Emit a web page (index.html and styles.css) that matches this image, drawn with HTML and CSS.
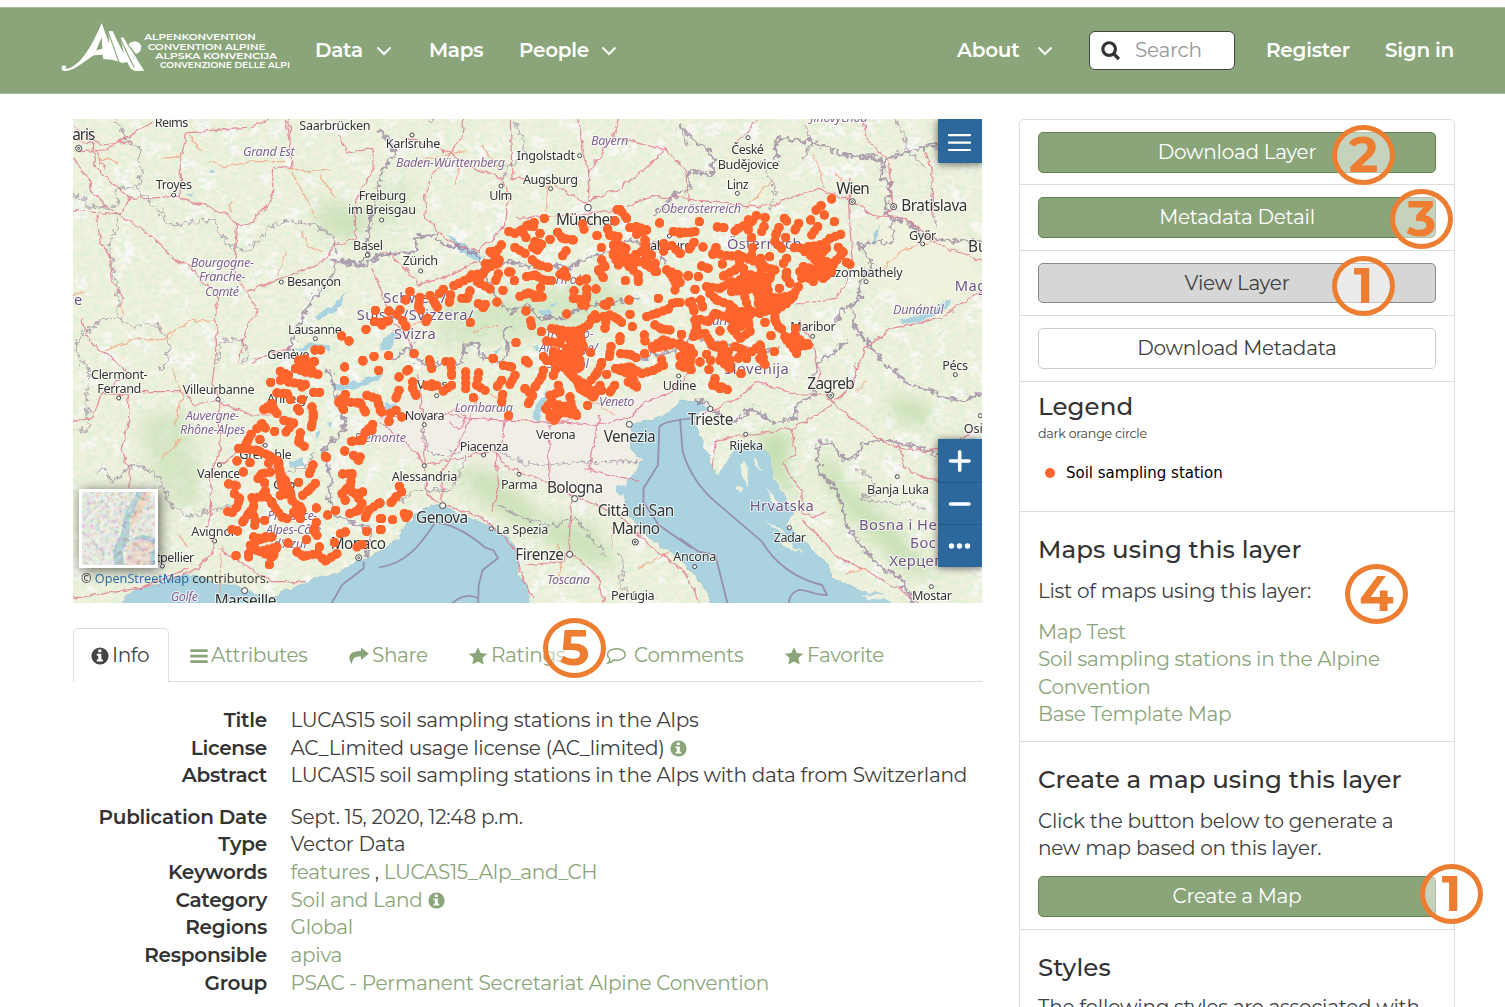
FILE: index.html
```
<!DOCTYPE html>
<html lang="en">
<head>
<meta charset="utf-8">
<title>LUCAS15 soil sampling stations in the Alps</title>
<link rel="stylesheet" href="styles.css">
</head>
<body>
<svg class="defs" width="0" height="0" aria-hidden="true">
  <symbol id="i-info" viewBox="0 0 18 18"><circle cx="9" cy="9" r="8.6" fill="currentColor"/><path d="M7.2 2.6h3.2v2.6H7.2zM5.8 6.8h4.6v5.6h1.5v2H5.8v-2h1.5V8.8H5.8z" fill="#fff"/></symbol>
  <symbol id="i-bars" viewBox="0 0 18 18"><path d="M.3 2.200h17.400V5H.3zM.3 7.700h17.400v2.800H.3zM.3 13.200h17.400V16H.3z" fill="currentColor"/></symbol>
  <symbol id="i-share" viewBox="0 0 20 18"><path d="M12 .5l7.8 6.2L12 13V9.6C6 9.3 3.200 11.300 3 17.300 1.500 15.500.4 13 .4 11 .4 5.800 5 3.900 12 3.900z" fill="currentColor"/></symbol>
  <symbol id="i-star" viewBox="0 0 20 18"><path d="M10 .2l2.700 5.800 6.500.8-4.800 4.300 1.300 6.500L10 14.400l-5.700 3.200 1.300-6.500L.8 6.800l6.500-.8z" fill="currentColor"/></symbol>
  <symbol id="i-comment" viewBox="0 0 20 18"><path d="M10.500 1.800c5 0 8.700 2.500 8.700 5.800s-3.700 5.800-8.700 5.800c-1 0-2-.1-2.900-.4-1.200 1.400-3.100 2.700-5.500 3 1.200-1 1.700-2.600 1.700-4C2.300 11 1.500 9.300 1.500 7.600c0-3.300 4-5.800 9-5.800z" fill="none" stroke="currentColor" stroke-width="1.500"/></symbol>
  <symbol id="i-chev" viewBox="0 0 16 10"><path d="M1.500 1.500L8 8l6.500-6.500" fill="none" stroke="currentColor" stroke-width="2"/></symbol>
</svg>

<header class="navbar">
  <svg class="logo" viewBox="50 60 620 160" preserveAspectRatio="none">
    <path fill="#fff" d="M57 203C56 196 66 195 69 200 65 202 67 207 73 206 112 194 143 119 162 69Q168 91 182 132L179 94 190 93Q204 128 220 161L214 130 210 113 218 112Q230 137 248 166 260 191 273 212L248 213 238 206 228 186 216 189 203 184 192 180 166 177 164 164 142 166C121 178 93 213 65 213 59 212 57 208 57 203zM162 112L147 151 163 146z"/>
    <path d="M232 133C240 119 263 123 265 139 266 153 257 162 251 161z" fill="#fff"/>
    <path d="M178 94Q194 145 209 193M209 112Q228 161 247 203" fill="none" stroke="#8ba57b" stroke-width="3"/>
    <g fill="#fff" font-family="Montserrat,Lato,sans-serif" font-weight="600" font-size="27">
      <text x="273" y="120" textLength="292" lengthAdjust="spacingAndGlyphs">ALPENKONVENTION</text>
      <text x="282" y="149" textLength="308" lengthAdjust="spacingAndGlyphs">CONVENTION ALPINE</text>
      <text x="302" y="176" textLength="319" lengthAdjust="spacingAndGlyphs">ALPSKA KONVENCIJA</text>
      <text x="314" y="205" textLength="340" lengthAdjust="spacingAndGlyphs">CONVENZIONE DELLE ALPI</text>
    </g>
  </svg>
  <nav class="nav-main">
    <a class="n-data">Data <svg class="chev"><use href="#i-chev"/></svg></a>
    <a class="n-maps">Maps</a>
    <a class="n-people">People <svg class="chev"><use href="#i-chev"/></svg></a>
  </nav>
  <nav class="nav-user">
    <a class="n-about">About <svg class="chev"><use href="#i-chev"/></svg></a>
    <div class="search"><svg viewBox="0 0 18 19"><circle cx="7.700" cy="7.700" r="6" fill="none" stroke="#333" stroke-width="3"/><path d="M12 12l5 5.200" stroke="#333" stroke-width="3.200"/></svg><span>Search</span></div>
    <a class="n-reg">Register</a>
    <a class="n-sign">Sign in</a>
  </nav>
</header>

<div class="page">
<main class="main">
  <div class="map">
    <svg class="map-canvas" viewBox="3 2 2727 1452" preserveAspectRatio="none">
      <defs>
        <filter id="woods" x="0" y="0" width="100%" height="100%"><feTurbulence type="fractalNoise" baseFrequency="0.05 0.07" numOctaves="5" seed="8"/><feColorMatrix values="0 0 0 0 .75  0 0 0 0 .865  0 0 0 0 .68  5 0 0 0 -2.250"/></filter>
        <filter id="town" x="0" y="0" width="100%" height="100%"><feTurbulence type="fractalNoise" baseFrequency="0.016" numOctaves="4" seed="21"/><feColorMatrix values="0 0 0 0 .945  0 0 0 0 .93  0 0 0 0 .905  6 0 0 0 -3.200"/></filter>
        <filter id="soft" x="-20%" y="-20%" width="140%" height="140%"><feGaussianBlur stdDeviation="22"/></filter>
        <filter id="rough" filterUnits="userSpaceOnUse" x="0" y="0" width="2740" height="1470"><feTurbulence type="fractalNoise" baseFrequency="0.06" numOctaves="2" seed="3"/><feDisplacementMap in="SourceGraphic" scale="34" xChannelSelector="R" yChannelSelector="G"/></filter>
        <filter id="wavy" filterUnits="userSpaceOnUse" x="0" y="0" width="2740" height="1470"><feTurbulence type="fractalNoise" baseFrequency="0.04" numOctaves="2" seed="9"/><feDisplacementMap in="SourceGraphic" scale="20" xChannelSelector="R" yChannelSelector="G"/></filter>
        <marker id="station" markerUnits="userSpaceOnUse" markerWidth="28" markerHeight="28" refX="14" refY="14"><circle cx="14" cy="14" r="14" fill="#ff642d" stroke="none"/></marker>
      </defs>
      <rect width="2740" height="1470" fill="#eff1dc"/>
      <rect width="2740" height="1470" filter="url(#town)"/>
      <rect width="2740" height="1470" filter="url(#woods)" opacity=".85"/>
      <g filter="url(#soft)">
        <path d="M1000 840L1150 870 1400 890 1640 860 1760 790 1830 830 1690 930 1680 1060 1760 1200 1640 1180 1400 1090 1180 1010 1000 1010 900 950z" fill="#f1ede6" opacity=".95"/>
        <path d="M1120 1060L1260 1050 1420 1200 1560 1210 1640 1360 1560 1340 1420 1270 1280 1190z" fill="#c2ddae" opacity=".7"/>
        <path d="M2060 940L2160 950 2140 1050 2180 1130 2120 1110 2080 1030z" fill="#c2ddae"/>
        <path d="M2260 1000L2330 1100 2450 1200 2600 1380 2500 1360 2330 1200 2240 1060z" fill="#c2ddae" opacity=".8"/>
        <path d="M720 250L900 270 860 370 760 350z" fill="#c2ddae" opacity=".7"/>
        <path d="M930 200L1010 180 980 320 920 350zM1100 560L1600 480 1700 560 1500 640 1100 690z" fill="#c2ddae" opacity=".5"/>
        <path d="M200 900L340 880 400 1120 330 1180 250 1080z" fill="#c2ddae" opacity=".55"/>
        <path d="M2420 300L2620 300 2720 500 2560 560 2400 480z" fill="#f1f2dd"/>
        <path d="M2450 830L2580 860 2560 930 2460 900z" fill="#c2ddae" opacity=".8"/>
      </g>

      <g filter="url(#wavy)">
      <g fill="#aad3df" stroke="#9cc3d0" stroke-width="2">
        <path d="M130 1500L160 1436 200 1410 260 1396 330 1370 380 1372 430 1395 500 1404 540 1425 590 1442 640 1416 700 1396 740 1376 790 1366 850 1331 900 1316 935 1290 975 1262 1000 1222 1030 1192 1075 1161 1118 1162 1165 1190 1235 1215 1285 1238 1325 1278 1340 1326 1338 1366 1365 1398 1376 1500z"/>
        <path d="M1798 874L1764 896 1674 921 1676 986 1708 1026 1690 1066 1664 1086 1658 1126 1676 1196 1726 1256 1806 1306 1840 1346 1874 1376 1904 1416 1926 1500 2500 1500 2430 1426 2364 1416 2280 1376 2264 1330 2220 1296 2184 1256 2140 1220 2168 1186 2124 1116 2100 1076 2094 1016 2074 986 2044 976 1994 982 1976 1016 1935 1076 1910 1026 1884 946 1866 910 1880 878 1924 876 1880 850 1824 845z"/>
        <path d="M2485 606L2560 585 2605 558 2638 540 2630 565 2590 590 2540 610 2490 616zM2405 340L2425 320 2412 365 2400 384zM672 694L710 675 775 680 772 700 730 690 690 700zM730 598L790 552 825 520 800 570 750 600zM1124 350L1175 375 1236 420 1210 425 1165 400zM1392 860L1420 820 1432 792 1420 850 1400 915 1382 900zM1635 1106L1655 1100 1665 1120 1645 1133 1633 1122zM924 890L945 855 975 860 950 885z" stroke="none"/>
        <path d="M1400 580L1435 570 1440 585 1410 595zM1430 560L1450 550 1445 565zM930 655L985 640 960 685 925 695zM1385 690L1400 675 1395 700zM1260 700L1290 690 1280 705zM780 800L860 790 930 765 925 785 860 810 785 815zM730 945L745 940 740 958zM765 915L780 912 775 930zM650 1030L690 1020 690 1045 655 1045zM412 150L430 155 425 165 410 162zM345 232L370 218 362 235z" stroke="none"/>
      </g>
      <g fill="#eef0de">
        <path d="M2010 1028L2026 1040 2030 1110 2016 1090 2004 1050zM2042 1010L2060 1030 2070 1060 2050 1040zM2080 1100L2110 1140 2130 1170 2100 1150zM1990 1100L2014 1110 2006 1124zM2070 1200L2120 1230 2150 1258 2100 1226zM2100 1240L2150 1270 2200 1310 2140 1280zM2350 1400L2400 1394 2440 1412 2390 1426zM2320 1360L2360 1370 2400 1375 2350 1376zM2360 1436L2430 1428 2460 1440 2400 1446z"/>
      </g>
      </g>

      <!-- country and region borders -->
      <g fill="none" stroke="#8d7597" stroke-linejoin="round">
        <g stroke-width="4.500" opacity=".55" filter="url(#rough)">
          <path d="M130 0L158 45 165 70 205 92 200 130 212 165 195 205 130 212 138 260 120 270 40 265 35 240 0 225M195 205L235 250 270 285 280 315 330 318 370 310 425 305 455 365 490 390 515 400 560 370 590 330 650 305 690 315 730 318 790 365 795 410M145 290L125 350 110 390 120 440 135 500 140 595M140 595L80 610 20 660 10 700 40 740M140 595L185 625 250 618 290 660 290 720 260 760M436 735L445 670 510 665 530 700 510 735"/>
          <path d="M50 740L45 820 50 930 0 940M70 1060L100 1050 120 1090 190 1035 260 1075 300 1170 360 1195 410 1180 490 1160M730 1000L700 1050 640 1060M1080 0L1070 10M1324 0L1355 60 1360 120 1310 140 1290 185M1820 30L1850 80M2060 130L2090 170 2110 230 2090 280M2200 20L2220 70 2190 130M2470 0L2490 40 2510 100 2560 150M2580 200L2590 330M2350 1050L2400 1080 2410 1130 2360 1140 2480 1160 2520 1150 2560 1180M1050 930L1070 1000 1100 1010 1170 1000M1180 1010L1160 1080 1130 1120 1040 1115 980 1150M1270 990L1360 1040 1450 1040 1530 1030 1690 1030M1280 1160L1330 1190 1440 1225 1510 1200 1560 1260 1600 1310M1640 1300L1660 1340 1640 1400 1700 1440"/>
        </g>
        <g stroke-width="7.500" opacity=".66" filter="url(#rough)">
          <path d="M930 160L900 290 885 360 886 415 860 440 790 430 785 470 740 520 710 560 690 600 660 670 635 720"/>
          <path d="M795 425L880 440 925 410 980 405 1030 400 1030 355 1090 350 1110 380 1180 390 1230 420 1230 460 1245 490 1290 560 1320 580 1370 560 1400 600 1480 600 1500 580 1570 560 1640 550 1700 540M924 160L970 110 960 70 924 40M960 730L1020 680 1020 720 1070 740 1170 735 1180 680 1220 675 1230 720 1290 730 1310 690 1290 640 1320 620"/>
          <path d="M1220 470L1240 430 1310 430 1380 445 1440 440 1490 450 1560 410 1620 400 1660 370 1750 375 1780 440M1750 290L1800 235 1855 210 1850 160 1920 170 1925 110 1860 60 1824 25M2110 60L2115 130M2110 60L2230 70 2310 110 2400 115 2430 130 2430 180 2455 200 2440 280 2460 300 2460 375 2410 370 2360 380 2400 440 2360 500 2365 545 2320 570 2290 610M2430 130L2500 100 2560 85 2600 80M2460 300L2510 310 2550 350 2600 365 2740 368M1690 720L1800 700 1850 660 1900 660 1960 680 2070 700 2120 690"/>
          <path d="M2340 570L2350 630 2400 690 2440 740 2470 760 2510 800 2580 815 2600 840 2680 846 2740 818M2320 670L2290 700 2240 730 2220 800 2230 830 2170 860 2170 900 2100 910 2040 870 1990 910 1940 890 1900 850 1870 850"/>
          <path d="M2600 1010L2550 990 2500 980 2440 965 2380 975 2340 1020 2310 1020 2280 970 2240 970 2240 1060 2290 1110 2310 1160 2320 1210 2370 1290 2430 1350 2490 1380 2520 1455"/>
          <path d="M770 750L790 820 815 890 820 930 750 1000 780 1080 770 1140 790 1190 850 1220 900 1230 880 1320"/>
        </g>
        <path stroke-width="5.500" opacity=".7" d="M920 1348C1010 1335 1050 1270 1090 1212 1150 1218 1200 1255 1240 1288L1265 1296 1278 1320 1232 1355 1220 1400 1218 1470M1140 1455Q1180 1420 1220 1440M875 1330L875 1350 810 1400 770 1470M1860 900Q1760 910 1762 930L1758 1040 1715 1110 1714 1150 1760 1220 1860 1290M1824 900L1832 1000Q1860 1090 1930 1150L2070 1270Q2130 1370 2250 1400L2265 1430C2220 1430 2200 1410 2180 1415 2150 1425 2150 1450 2150 1470M1824 1260L1880 1300 1930 1310 1970 1470"/>
      </g>

      <!-- roads -->
      <g filter="url(#wavy)">
      <g fill="none" stroke="#e1718c" stroke-width="3.600" stroke-linejoin="round" opacity=".8">
        <path d="M0 120L45 170 60 220 110 270 150 295 220 340 280 390 300 420 350 440 400 500 440 520 430 600 435 720M20 100L100 95 180 50 240 10M70 140L130 205 180 240 300 232 400 262 465 290 497 320 490 400 490 470 525 520 555 575 520 640 500 735M325 240L325 130 345 40 530 30 590 0M650 0L660 150 605 145 600 240 540 312 497 320M0 275L145 290 175 237M75 290L85 380 115 410 120 480 155 545M525 520L640 475 740 440 790 380 850 365 850 250 910 140 900 90 825 105 800 50M30 600L40 650 80 690 170 760M60 70L70 150M0 60L60 75 100 150M640 0L650 60M5 20L90 80 180 70"/>
        <path d="M0 910L60 900 90 825 170 770M90 825L170 830 170 910 150 1000 175 1060 170 1110M210 820L330 820 370 860 440 845M430 720L420 800 440 850 445 1000 415 1070 420 1180 400 1230 430 1290 380 1350 260 1400M440 850L540 890 600 890M440 1040L500 1000 580 985M440 1290L520 1340 600 1390 700 1390M540 730L600 700 660 690M0 1440L200 1410 350 1350"/>
        <path d="M1175 0L1170 60 1120 120 1080 180 1055 230 1060 300 1130 370 1220 400 1300 320 1310 240 1290 180 1210 150 1130 100 1000 60M1315 0L1320 180 1440 195 1550 260 1555 330M1330 300L1500 290 1620 275 1740 235 1840 240M1520 0L1530 80 1550 160 1550 250M1550 160L1620 60 1640 0M1640 60L1780 95 1840 150 1850 250M1550 250L1640 210 1720 150 1780 95M1830 240L2050 265 2100 260 2230 210 2320 240 2410 290 2500 300 2600 380 2730 425M1980 90L2060 0M2370 0L2390 70 2450 130 2460 280 2410 300M2340 180L2330 260 2340 420 2320 500 2290 540 2170 560M2580 300L2580 150 2560 100M2730 520L2600 600 2460 630 2380 690 2350 760M2180 600L2230 700 2240 770 2230 820M940 400L1000 450 1040 500 1110 480 1220 430M900 450L960 600 1020 680"/>
        <path d="M924 895L1130 890 1190 900 1400 910 1560 920 1670 900 1720 850 1800 820 1850 760M1040 770L1050 860 1060 1040 1065 1130 1110 1160 1110 1060 1160 980 1220 830M924 910L1000 970 1060 1040M1060 1040L1200 1010 1270 1000 1300 1045 1400 1080 1500 1130 1640 1190 1720 1270 1840 1360 1890 1470M1110 1155L1230 1200 1280 1240 1330 1300 1350 1370 1380 1440M1500 1130L1490 1290 1480 1330 1360 1340M1430 1100L1430 920 1520 900M1580 890L1560 1010M1580 900L1550 1060M1300 900L1290 980M1540 1050L1700 1090M1500 1300L1580 1380 1600 1470M1270 1000L1280 1100 1260 1180M1130 890L1150 870 1180 890 1175 920 1145 930 1130 905"/>
        <path d="M1890 890L1940 870 2010 830 2050 790 2180 830 2260 830 2290 860 2380 930 2450 980 2560 1000 2650 970 2730 920M2280 860L2200 910 2160 930 2050 950 2000 950 1930 970 1920 1050M2160 930L2170 1010 2130 1030 2190 1120 2190 1180 2220 1200 2260 1180M2190 1200L2290 1310 2370 1350 2440 1390 2540 1450M2290 850L2350 790 2350 730M2480 980L2500 1050 2560 1080 2700 1090"/>
      </g>
      <g fill="none" stroke="#f2a083" stroke-width="3.500" opacity=".8">
        <path d="M345 40L390 100M410 130L460 145 540 130 640 130M650 150L720 160 770 155M660 160L690 220 735 300M740 170L790 240M80 120L140 130M270 120L330 115M480 250L475 280M690 340L710 380 750 400M640 400L620 470M90 700L180 665 280 660 350 610 430 605M150 540L150 590M0 530L40 520M300 750L330 830 310 920M270 1020L330 960M1000 150L1100 110 1180 100M1230 80L1280 150M1430 190L1420 280M1160 150L1150 200M1200 640L1280 620M960 640L1050 610M1230 130L1260 150M2020 270L2100 180M2220 100L2260 210M2290 160L2310 190M2420 460L2500 390 2580 370M1560 850L1630 890M1620 1230L1620 1290M1700 1350L1790 1300M2380 1350L2320 1370M1300 850L1210 800M1460 1280L1470 1400M2350 820L2380 790M320 1250L350 1290M450 1280L440 1440"/>
      </g>
      </g>

      <g class="places" fill="#fff" stroke="#444" stroke-width="3">
        <circle cx="305" cy="230" r="6"/><circle cx="628" cy="491" r="6"/><circle cx="886" cy="410" r="6"/><circle cx="730" cy="661" r="6"/><circle cx="1020" cy="50" r="6"/><circle cx="1287" cy="203" r="6"/><circle cx="1436" cy="211" r="6"/><circle cx="1523" cy="112" r="6"/><circle cx="1548" cy="268" r="10"/><circle cx="1046" cy="458" r="6"/><circle cx="929" cy="305" r="6"/><circle cx="2028" cy="58" r="6"/><circle cx="1996" cy="225" r="6"/><circle cx="2552" cy="377" r="6"/><circle cx="2382" cy="490" r="6"/><circle cx="2222" cy="654" r="6"/><circle cx="1792" cy="353" r="6"/>
        <circle cx="140" cy="839" r="6"/><circle cx="438" cy="843" r="6"/><circle cx="442" cy="1040" r="6"/><circle cx="580" cy="981" r="6"/><circle cx="428" cy="1268" r="6"/><circle cx="271" cy="1343" r="6"/><circle cx="518" cy="1417" r="9"/><circle cx="660" cy="1102" r="6"/><circle cx="1057" cy="919" r="6"/><circle cx="1057" cy="1042" r="6"/><circle cx="1235" cy="1010" r="6"/><circle cx="1341" cy="1068" r="6"/><circle cx="1508" cy="1141" r="9"/><circle cx="1112" cy="1162" r="9"/><circle cx="1258" cy="1231" r="6"/><circle cx="1493" cy="1308" r="9"/><circle cx="1672" cy="918" r="9"/><circle cx="1915" cy="872" r="8"/><circle cx="2021" cy="948" r="6"/><circle cx="2152" cy="1228" r="6"/><circle cx="2476" cy="1075" r="6"/><circle cx="2578" cy="1405" r="6"/><circle cx="1868" cy="1345" r="6"/><circle cx="2650" cy="769" r="6"/><circle cx="2725" cy="892" r="6"/><circle cx="1094" cy="832" r="6"/><circle cx="1820" cy="773" r="6"/>
        <g><circle cx="20" cy="90" r="9"/><circle cx="20" cy="90" r="3"/><circle cx="2341" cy="250" r="9"/><circle cx="2341" cy="250" r="3"/><circle cx="2465" cy="265" r="9"/><circle cx="2465" cy="265" r="3"/><circle cx="2276" cy="831" r="9"/><circle cx="2276" cy="831" r="3"/><circle cx="860" cy="1318" r="9"/><circle cx="860" cy="1318" r="3"/><circle cx="1690" cy="1271" r="9"/><circle cx="1690" cy="1271" r="3"/></g>
      </g>

      <g class="town">
        <text x="248" y="26" textLength="101">Reims</text><text class="big" x="-24" y="65" textLength="94">Paris</text><text x="682" y="35" textLength="214">Saarbrücken</text><text x="251" y="213" textLength="109">Troyes</text><text x="860" y="245" textLength="143">Freiburg</text><text x="828" y="286" textLength="204">im Breisgau</text><text x="843" y="396" textLength="90">Basel</text><text x="645" y="503" textLength="162">Besançon</text><text x="648" y="647" textLength="162">Lausanne</text><text x="586" y="723" textLength="126">Genève</text>
        <text x="941" y="90" textLength="164">Karlsruhe</text><text x="1334" y="125" textLength="175">Ingolstadt</text><text x="1353" y="196" textLength="165">Augsburg</text><text x="1252" y="245" textLength="69">Ulm</text><text class="big" x="1452" y="319" textLength="188">München</text><text x="992" y="441" textLength="106">Zürich</text><text x="1715" y="395" textLength="145">Salzburg</text>
        <text x="1978" y="108" textLength="98">České</text><text x="1937" y="152" textLength="184">Budějovice</text><text x="1964" y="211" textLength="66">Linz</text><text class="big" x="2293" y="228" textLength="100">Wien</text><text class="big" x="2488" y="279" textLength="198">Bratislava</text><text x="2511" y="364" textLength="82">Győr</text><text class="big" x="2688" y="402">Budapest</text><text x="2270" y="477" textLength="222">Szombathely</text><text x="2155" y="639" textLength="136">Maribor</text>
        <text x="57" y="782" textLength="170">Clermont-</text><text x="76" y="825" textLength="132">Ferrand</text><text x="332" y="827" textLength="216">Villeurbanne</text><text x="585" y="855" textLength="123">Annecy</text><text x="502" y="1022" textLength="157">Grenoble</text><text x="375" y="1080" textLength="130">Valence</text><text x="604" y="1111" textLength="66">Gap</text><text x="358" y="1254" textLength="142">Avignon</text><text x="175" y="1330" textLength="192">Montpellier</text><text class="big" x="776" y="1293" textLength="166">Monaco</text><text class="big" x="428" y="1462" textLength="185">Marseille</text>
        <text x="1035" y="812" textLength="112">Varese</text><text x="998" y="905" textLength="120">Novara</text><text x="1163" y="997" textLength="147">Piacenza</text><text x="1392" y="961" textLength="119">Verona</text><text class="big" x="1595" y="971" textLength="156">Venezia</text><text x="959" y="1087" textLength="197">Alessandria</text><text x="1287" y="1111" textLength="110">Parma</text><text class="big" x="1425" y="1124" textLength="168">Bologna</text><text class="big" x="1577" y="1192" textLength="230">Città di San</text><text class="big" x="1619" y="1248" textLength="145">Marino</text><text class="big" x="1032" y="1213" textLength="156">Genova</text><text x="1273" y="1246" textLength="156">La Spezia</text><text class="big" x="1330" y="1324" textLength="146">Firenze</text><text x="1617" y="1444" textLength="131">Perugia</text><text x="1772" y="816" textLength="101">Udine</text>
        <text class="big" x="2206" y="811" textLength="142">Zagreb</text><text x="2611" y="755" textLength="77">Pécs</text><text class="big" x="1848" y="919" textLength="136">Trieste</text><text x="1972" y="996" textLength="101">Rijeka</text><text x="2385" y="1126" textLength="186">Banja Luka</text><text x="2105" y="1270" textLength="97">Zadar</text><text x="2520" y="1445" textLength="120">Mostar</text><text x="1804" y="1329" textLength="129">Ancona</text><text x="2675" y="943">Osijek</text>
      </g>
      <g class="region">
        <text x="513" y="113" textLength="155">Grand Est</text><text x="356" y="446" textLength="190">Bourgogne-</text><text x="381" y="489" textLength="139">Franche-</text><text x="399" y="532" textLength="102">Comté</text><text x="972" y="147" textLength="327">Baden-Württemberg</text><text x="1557" y="80" textLength="112">Bayern</text><text x="1767" y="284" textLength="240">Oberösterreich</text><text x="2215" y="12" textLength="172">Jihovýchod</text><text x="2463" y="586" textLength="152">Dunántúl</text><text x="1446" y="497" textLength="80">Tirol</text><text x="1420" y="660" textLength="145">Trentino-</text><text x="1402" y="702" textLength="176">Alto Adige/</text><text x="1425" y="750" textLength="125">Südtirol</text><text x="1900" y="620" textLength="130">Kärnten</text>
        <text x="341" y="904" textLength="161">Auvergne-</text><text x="324" y="948" textLength="196">Rhône-Alpes</text><text x="586" y="1204" textLength="150">Provence-</text><text x="582" y="1248" textLength="165">Alpes-Côte</text><text x="604" y="1290" textLength="106">d'Azur</text><text x="1148" y="881" textLength="175">Lombardia</text><text x="847" y="971" textLength="155">Piemonte</text><text x="1581" y="862" textLength="106">Veneto</text><text x="1425" y="1398" textLength="129">Toscana</text><text x="296" y="1448" textLength="82">Golfe</text>
      </g>
      <g class="country">
        <text x="32" y="559" text-anchor="end">Centre-Val de Loire</text><text x="934" y="553" textLength="190">Schweiz/</text><text x="854" y="606" textLength="352">Suisse/Svizzera/</text><text x="966" y="662" textLength="127">Svizra</text><text x="1965" y="391" textLength="225">Österreich</text><text x="2648" y="519">Magyarország</text><text x="1957" y="768" textLength="195">Slovenija</text><text x="2033" y="1177" textLength="194">Hrvatska</text><text x="2361" y="1235">Bosna i Hercegovina</text><text x="2514" y="1290">Босна и</text><text x="2452" y="1343">Херцеговина</text>
      </g>

      <!-- sampling stations -->
      <g class="stations" marker-start="url(#station)" marker-mid="url(#station)" marker-end="url(#station)">
        <path d="M910 576h0M907 610h0M930 620h0M882 633h0M809 653h0M831 668h0M729 695h17M680 727l20-5M727 730h0M873 728h0M906 714h0"/>
        <path transform="translate(924)" d="M493 300h0M462 313L440 322 460 325M387 340L405 345 425 335 438 358M480 345h0M533 342L548 360 580 365M510 363h0M364 380L350 398 330 400 345 415 358 425M405 388L435 405M465 370L485 378 472 395 458 387M472 375v20M558 398L548 412M608 317L612 333M651 352h0M664 388h0M705 308h0M712 274h8L740 300M683 332L690 352 714 354M750 328L770 325 800 335 770 348M839 314h0M795 365L798 395M700 380h0M715 378L738 390 720 400M768 408h0M851 398V375M880 340L930 342M875 382L900 405M316 437L350 435M275 470L310 465 320 450 355 435M292 490L300 478M300 495L330 512M222 502L235 496 275 475M355 467L347 487M386 461h7M403 487h0M369 516h0M351 551h0M457 425L475 440 505 447M440 475L465 470 490 485 515 487M553 458L560 475 540 468M482 508h0M420 534L445 524 487 536 465 538M90 520h0M77 545h0M120 537L115 565 122 575M150 532L165 555 172 567M190 513L178 525M212 530L208 552M270 518L262 540 245 540M295 556L310 568 316 558M60 575L50 588M27 578h0M0 612L25 608M68 607L78 625M143 600L138 610M271 613h0M26 712h0M102 706h0M148 725h0M198 730h0M339 720h0M438 578h0M452 608L455 622M484 640h0M408 673h0M437 728h0M560 587h0M582 518h0M620 512V540M648 512h0M580 540L605 545 605 560 616 560M600 488L620 482M665 425L675 445 655 455 670 478M736 487h0M700 410L715 440M700 405L745 420 780 430 800 440 830 460M735 410L760 440M720 420L750 445M748 445L775 470 775 490M795 380L800 430M785 400L815 410M860 455L895 470 885 515M870 465L885 490M825 435V460M925 472h0M747 545h0M835 540h0M877 555h0M865 572L830 585 800 595M890 552h0M928 552h0M750 588h0M757 625h0M688 550L680 562 672 558M670 595L690 590 710 600 725 612M680 595L675 630M645 590L625 620 600 635 570 640 515 630M635 600h15M500 668L540 675 545 650 600 650 610 685 560 690 570 720 520 700 600 725M530 635L575 670 575 700M520 715H590M600 640V700M720 656V667M693 685L688 715M722 706L750 708 768 718M793 650L795 668M794 706h0M825 620L845 632 870 635M817 685L850 665 900 680 920 700M820 690L870 680M905 648h0M930 690V735M845 725h0M632 702h0M490 715h0M665 732h0"/>
        <path transform="translate(1824)" d="M455 242h0M423 262L408 276M433 290h0M463 310h0M392 305h0M413 325L395 350M313 300L320 308M356 315L345 335M297 328L287 350M317 357h0M229 292L215 310 175 330 165 338M205 305V335M255 298h0M252 325L245 340M215 358h0M112 326L132 328M58 310h0M0 345L45 340M42 372L28 392M69 386h0M108 388L98 408M0 405h0M127 437h0M105 405L140 412 185 415 220 428M215 410h0M218 388h0M175 410L180 440 165 455 130 473M482 348L450 360 438 372M475 387L490 402 470 425 450 440M500 432L510 438M385 385L420 380 430 400 400 415 440 430 455 460 430 480 410 470 365 480M375 400L440 390M380 400L420 440 460 440M360 460L400 490M370 445L440 460M343 388L375 390M285 370L305 390M269 415h0M320 420L310 435M242 420L250 445 285 455M240 440L250 480M65 443L85 450M24 473h0M55 475h0M0 492h0M45 513h0M80 505L120 510 155 490 170 500 210 470 240 475 270 480 275 455M320 462L318 475 330 495M298 510h0M190 450L200 500M155 520L230 510 260 530 290 540 340 530 355 505M180 485L260 495 270 540M220 490L240 550M90 525L110 545 150 560 180 585 240 580 290 575 320 555 340 535M190 520L210 590M235 555L300 555M250 530L290 565M35 550L42 578M62 545L68 566M0 553h0M60 603L85 610 105 585 150 600 200 610M150 580L250 580M50 625L40 655M45 605L55 650M75 645L90 670M120 638h0M4 648h0M160 605L180 625 205 610 210 640 180 660 155 630M240 585h0M255 612h0M285 580L285 605 295 625 305 632M273 652h0M347 630L345 655 320 665 340 690 385 680M315 655L360 665M350 705h0M380 675h0M283 700h0M242 685L250 718M215 700L240 680M0 675L30 690 40 705 30 725 0 715M80 708h0M105 685L130 680 125 715 150 725M95 680L145 700M165 685L190 695 175 720"/>
        <path transform="translate(0 726)" d="M725 5h0M690 0V10L670 25 700 35 738 42M680 0L720 30M625 33L650 45 625 60M596 66h0M650 65L700 73 690 80M725 96h18M615 98L645 100 655 118M690 117h0M600 130L575 147 605 145 615 160M677 145L682 152M720 140L725 165 718 200M636 180L665 188 642 215M555 205L570 190 580 203M608 213h0M685 218L680 245 697 258M537 222L525 245 515 265M564 238h0M500 264L555 270 590 285 620 305 625 340 640 360 655 395 660 420 690 450M495 302h0M534 307h0M514 335h0M590 308h0M595 335L570 340 558 355M578 368h0M470 371L493 376M487 400L503 415 495 440 480 457 467 454M580 392L570 410 540 412M575 400L600 425M545 420L545 440 530 460 512 485M540 450L550 480 548 495M578 480h0M600 430L630 470 645 475M625 405L650 400M685 440L685 475 665 455M615 300L630 380M723 314L712 340M680 366h0M730 369L710 390 692 405M760 288L764 291M733 443h0M480 508L497 512M733 486L725 510 735 525M703 538h0M545 530L570 535 600 530M580 530L550 545M535 555L555 570 600 590 615 560 575 570M610 565L605 585M530 580V590M648 548h0M492 586h0M592 613h0M675 575L695 588 735 580 760 602 795 580M742 560h0M787 546h0M820 515L805 520M767 464h0M791 450h0M818 20h0M817 61h0M872 0h0M920 30h0M820 103L800 125 815 148M820 125L865 128 880 155M885 105L915 115 925 150M902 193L880 215 870 240 838 243M895 210h5M818 272h0M845 285L860 300 865 290M812 341L840 340 835 375 810 400 820 420M825 385L850 400 872 395M850 400L870 430 860 450 833 460M920 430L890 450 880 472M925 475h0M884 513h0M925 508h0M870 553L855 560"/>
        <path transform="translate(924 726)" d="M57 50h0M85 28L80 32M57 90L48 113M98 65L98 85 108 105M-5 130L5 155M48 150L30 160M27 183h0M65 170h0M150 5L155 25M213 5L215 45M140 75L155 71 170 75 155 79zM190 92L215 75M257 35V85M296 38L290 75 315 90M280 112h0M386 166h0M368 103L365 125M370 15L395 20M405 45L390 72M365 60L352 78M437 0L445 8M435 85L458 105 445 130M490 30L485 50 465 80M520 45L530 20 560 10 570 40 600 20M500 0L600 15M540 10L590 60 600 85 640 110 660 75M580 50L620 75 650 40 665 10M610 90L665 90M623 135h0M680 42h0M704 75L690 95M707 25L750 20 785 40 820 30 850 15M720 30L755 45 770 78M745 65L770 80M535 75L540 95 510 105M570 110L575 140 590 165M515 120L497 145 515 165 522 180 545 155 590 165M520 130L560 140M530 150L510 170M910 20h10M58 378L65 395M48 410L33 427M0 428h0M38 478h0M5 475h0M73 460L85 462 78 472M3 508h0M340-5h0"/>
        <path transform="translate(1824 726)" d="M0 15L20 20M15 0h0M33 28h0M60 5h0M87 28h0M92 0h0M120 0L150 25 150 0M183 40h0M240-5L255 12M105 55L98 75 125 80 142 88M120 85h0M200-5h0"/>
      </g>
    </svg>
    <div class="overview"><svg viewBox="0 0 72 72"><defs><filter id="city" x="0" y="0" width="100%" height="100%"><feTurbulence type="fractalNoise" baseFrequency=".22" numOctaves="4" seed="4"/><feColorMatrix values="2.400 0 0 0 -.5  0 2 0 0 -.25  0 0 2.400 0 -.5  0 0 0 0 1"/><feColorMatrix type="saturate" values=".55"/></filter></defs><rect width="72" height="72" fill="#eceae2"/><path d="M42 72L45 52 55 44 72 50V72z" fill="#edd0c4"/><path d="M54 0L42 22 38 42 30 58 32 72H42L40 58 46 48 47 27 60 0zM46 48L60 46 72 52V45L58 42zM68 60L72 55V72H66z" fill="#9fc3cd"/><path d="M60 0L49 26 47 38 59 20 68 0z" fill="#f0caae"/><rect width="72" height="72" filter="url(#city)" opacity=".38"/></svg></div>
    <p class="attribution">© <a>OpenStreetMap</a> contributors.</p>
    <button class="map-menu" aria-label="Menu"><svg viewBox="0 0 43 43"><path d="M11 15.200h21M11 22.700h21M11 30h21" stroke="#fff" stroke-width="2.200" stroke-linecap="round"/></svg></button>
    <div class="map-zoom">
      <button aria-label="Zoom in"><svg viewBox="0 0 43 43"><path d="M12.500 22h18.500M21.700 12.700v18.500" stroke="#fff" stroke-width="3.600" stroke-linecap="round"/></svg></button>
      <button aria-label="Zoom out"><svg viewBox="0 0 43 43"><path d="M12.500 21h18.500" stroke="#fff" stroke-width="3.600" stroke-linecap="round"/></svg></button>
      <button aria-label="More"><svg viewBox="0 0 43 43"><g fill="#fff"><circle cx="13.500" cy="21" r="2.700"/><circle cx="21.500" cy="21" r="2.700"/><circle cx="29.500" cy="21" r="2.700"/></g></svg></button>
    </div>
  </div>

  <div class="tabs">
    <a class="tab active"><svg class="ic"><use href="#i-info"/></svg><span>Info</span></a>
    <a class="tab t-attr"><svg class="ic"><use href="#i-bars"/></svg><span>Attributes</span></a>
    <a class="tab t-share"><svg class="ic wide"><use href="#i-share"/></svg><span>Share</span></a>
    <a class="tab t-rate"><svg class="ic wide"><use href="#i-star"/></svg><span>Ratings</span></a>
    <a class="tab t-comm"><svg class="ic wide"><use href="#i-comment"/></svg><span>Comments</span></a>
    <a class="tab t-fav"><svg class="ic wide"><use href="#i-star"/></svg><span>Favorite</span></a>
  </div>

  <dl class="info">
    <dt>Title</dt><dd>LUCAS15 soil sampling stations in the Alps</dd>
    <dt>License</dt><dd>AC_Limited usage license (AC_limited) <svg class="dot"><use href="#i-info"/></svg></dd>
    <dt>Abstract</dt><dd>LUCAS15 soil sampling stations in the Alps with data from Switzerland</dd>
  </dl>
  <dl class="info second">
    <dt>Publication Date</dt><dd>Sept. 15, 2020, 12:48 p.m.</dd>
    <dt>Type</dt><dd>Vector Data</dd>
    <dt>Keywords</dt><dd><a>features</a> , <a>LUCAS15_Alp_and_CH</a></dd>
    <dt>Category</dt><dd><a>Soil and Land</a> <svg class="dot"><use href="#i-info"/></svg></dd>
    <dt>Regions</dt><dd><a>Global</a></dd>
    <dt>Responsible</dt><dd><a>apiva</a></dd>
    <dt>Group</dt><dd><a>PSAC - Permanent Secretariat Alpine Convention</a></dd>
  </dl>
</main>

<aside class="side">
  <div class="cell"><a class="btn green">Download Layer</a><span class="mark m-mid">2</span></div>
  <div class="cell"><a class="btn green">Metadata Detail</a><span class="mark m-right">3</span></div>
  <div class="cell"><a class="btn grey">View Layer</a><span class="mark m-mid">1</span></div>
  <div class="cell"><a class="btn">Download Metadata</a></div>
  <section class="cell legend"><h4>Legend</h4><p class="sub">dark orange circle</p><p class="key"><i></i>Soil sampling station</p></section>
  <section class="cell using"><h4>Maps using this layer</h4><p>List of maps using this layer:</p>
    <ul><li>Map Test</li><li>Soil sampling stations in the Alpine Convention</li><li>Base Template Map</li></ul><span class="mark m-list">4</span></section>
  <section class="cell create"><h4>Create a map using this layer</h4><p>Click the button below to generate a<br>new map based on this layer.</p><a class="btn green">Create a Map</a><span class="mark m-create">1</span></section>
  <section class="cell styles"><h4>Styles</h4><p>The following styles are associated with</p></section>
</aside>
<span class="mark m-tab">5</span>
</div>
</body>
</html>
```
FILE: styles.css
```
*{box-sizing:border-box}
html{overflow:hidden}
body{margin:0;height:1007px;overflow:hidden;background:#fff;color:#3f3f3f;font-family:Montserrat,Inter,"Open Sans",sans-serif;font-size:20px;letter-spacing:-.27px;line-height:27.800px}
p,h4,dl,dd,ul{margin:0;padding:0}
li{list-style:none}
.defs{position:absolute}
.navbar{margin-top:7px;height:87px;background:#8ba57b;border-top:1px solid #a9bd9d;border-bottom:1px solid #a9bd9d;display:flex;align-items:center;padding:0 50px 0 59px;color:#fff;font-weight:600}
.logo{width:237px;height:53.300px;margin:0 19px 7px 0;flex:none;letter-spacing:0;overflow:visible}
.nav-main,.nav-user{display:flex;align-items:center;white-space:nowrap}
.nav-user{margin-left:auto}
.navbar a{display:flex;justify-content:space-between;align-items:center}
.chev{width:16px;height:10px;margin-top:2px}
.n-data{width:77px;margin-right:37px}
.n-maps{width:54px;margin-right:36px}
.n-people{width:98px}
.n-about{width:96px;margin-right:36px}
.n-reg{width:83px;margin-right:36px}
.n-sign{width:70px}
.search{width:146px;height:39px;background:#fff;border:1.500px solid #444;border-radius:6px;display:flex;align-items:center;padding-left:11px;margin-right:31px;font-weight:400;color:#999}
.search svg{width:19px;height:20px;margin-right:15px}
.page{position:relative;display:flex;padding:25px 50px 0 73px;height:913px;overflow:hidden}
.main{width:909px}
.map{position:relative;height:484px;overflow:hidden;background:#eff1dc;letter-spacing:0}
.map-canvas{display:block;width:909px;height:484px}
.map text{font-family:"Noto Sans",sans-serif;font-size:38px;paint-order:stroke;stroke:rgba(255,255,255,.75);stroke-width:6px;stroke-linejoin:round}
.town text{fill:#333}
.map text.big{font-size:46px}
.region text{fill:#7f6390;font-style:italic}
.map .country text{fill:#6f5283;font-size:44px;letter-spacing:1.500px}
.stations{fill:none;stroke:#ff642d;stroke-width:28;stroke-linecap:round;stroke-linejoin:round;stroke-dasharray:0 17}
.overview{position:absolute;left:6px;top:370px;width:79px;height:79px;border:3px solid #fff;box-shadow:2px 2px 12px rgba(0,0,0,.6)}
.overview svg{display:block;width:73px;height:73px}
.attribution{position:absolute;left:8px;top:450px;font:12.700px/18px "Open Sans",sans-serif;color:#333;white-space:nowrap}
.attribution a{color:#2867a0}
.map button{border:0;padding:0;display:block;width:44px;height:44px;background:#2c689c}
.map button svg{display:block;width:43px;height:43px}
.map .map-menu{position:absolute;right:0;top:0;box-shadow:0 1px 8px rgba(0,0,0,.6)}
.map-zoom{position:absolute;right:0;top:320px;box-shadow:0 1px 8px rgba(0,0,0,.6)}
.map .map-zoom button{height:42.700px}
.map .map-zoom button+button{border-top:1px solid #24588a}
.tabs{display:flex;height:54px;margin-top:25px;border-bottom:1px solid #ddd;color:#8ba57b;white-space:nowrap;letter-spacing:-.35px}
.tab{display:flex;align-items:center;padding:1px 0 0 21px;height:54px;flex:none}
.tab.active{width:96px;padding:0 0 0 17px;border:1px solid #ddd;border-bottom:0;border-radius:5px 5px 0 0;background:#fff;color:#444}
.ic{width:18px;height:18px;margin-right:3px}
.ic.wide{width:20px;margin-right:3px}
.t-attr{width:159px}.t-share{width:119px}.t-rate{width:138px}.t-comm{width:178px}
.t-comm .ic{margin-right:8px}
.info{display:grid;grid-template-columns:194px 1fr;column-gap:23.500px;margin-top:24.900px;white-space:nowrap}
.info.second{margin-top:13.300px;line-height:27.650px}
dt{text-align:right;font-weight:600;color:#333}
.info a,.using li{color:#8ba57b}
.dot{width:17px;height:17px;color:#8ba57b;vertical-align:-2px}
.side{width:436.500px;margin-left:37px;border:1px solid #ddd;border-radius:5px;height:1000px}
.cell{position:relative;height:65.400px;padding:12px 18px;border-bottom:1px solid #ddd}
.btn{display:flex;justify-content:center;align-items:center;height:40.500px;border:1px solid #ccc;border-radius:5px;padding-top:1px}
.btn.green{background:#8ba57b;border-color:#64824f;color:#fff}
.btn.grey{background:#d6d6d6;border-color:#888}
h4{font-size:24.500px;line-height:30px;font-weight:500;color:#333;white-space:nowrap;letter-spacing:.1px}
.legend{height:130px;padding-top:9.500px}
.sub{font-size:12.700px;line-height:24px;margin-top:1px}
.key{display:flex;align-items:center;font:15px/20px "DejaVu Sans",sans-serif;letter-spacing:0;color:#000;margin-top:16.500px}
.key i{width:10px;height:10px;border-radius:50%;background:#ff642d;margin:0 11px 0 7px}
.using{height:230px;padding-top:22.500px}
.using p{margin-top:13.500px}
.using ul{margin-top:13.500px}
.using li{line-height:27.500px}
.create{height:188px;padding-top:22.500px}
.create p{margin:13.500px 0 13px;white-space:nowrap}
.styles{padding-top:22.500px;border:0}
.styles p{margin-top:12px;white-space:nowrap}
.mark{position:absolute;width:63px;height:60px;border:5px solid #ed7d31;border-radius:50%;background:rgba(255,255,255,.5);color:#ed7d31;font-size:50px;line-height:50px;font-weight:700;text-align:center;letter-spacing:0}
.m-mid{left:312px;top:5px}
.m-right{left:370px;top:4px}
.m-list{left:325px;top:52px}
.m-create{left:400px;top:122px}
.m-tab{left:543px;top:524px}
```
